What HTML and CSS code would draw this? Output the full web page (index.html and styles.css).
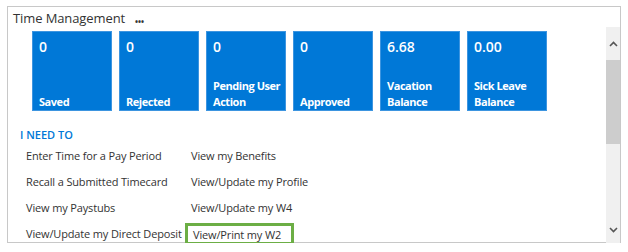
FILE: index.html
```html
<!DOCTYPE html>
<html lang="en">
<head>
    <meta charset="UTF-8">
    <meta name="viewport" content="width=device-width, initial-scale=1.0">
    <title>Time Management</title>
    <link rel="stylesheet" href="styles.css">
</head>
<body>
    <div class="panel">
        <div class="panel-header">
            <span class="panel-title">Time Management</span>
            <span class="more">&bull;&bull;&bull;</span>
        </div>

        <div class="panel-body">
            <div class="content">
                <!-- Tiles -->
                <div class="tiles">
                    <div class="tile"><span class="tile-num">0</span><span class="tile-label">Saved</span></div>
                    <div class="tile"><span class="tile-num">0</span><span class="tile-label">Rejected</span></div>
                    <div class="tile"><span class="tile-num">0</span><span class="tile-label">Pending User Action</span></div>
                    <div class="tile"><span class="tile-num">0</span><span class="tile-label">Approved</span></div>
                    <div class="tile"><span class="tile-num">6.68</span><span class="tile-label">Vacation Balance</span></div>
                    <div class="tile"><span class="tile-num">0.00</span><span class="tile-label">Sick Leave Balance</span></div>
                </div>

                <!-- Links -->
                <h3 class="need-title">I NEED TO</h3>
                <div class="links">
                    <a class="link">Enter Time for a Pay Period</a>
                    <a class="link">View my Benefits</a>
                    <a class="link">Recall a Submitted Timecard</a>
                    <a class="link">View/Update my Profile</a>
                    <a class="link">View my Paystubs</a>
                    <a class="link">View/Update my W4</a>
                    <a class="link">View/Update my Direct Deposit</a>
                    <a class="link highlight">View/Print my W2</a>
                </div>
            </div>

            <div class="scrollbar">
                <div class="scroll-btn">
                    <svg width="9" height="6" viewBox="0 0 9 6"><path d="M1 5 L4.5 1.5 L8 5" fill="none" stroke="#555" stroke-width="1.6"/></svg>
                </div>
                <div class="scroll-thumb"></div>
                <div class="scroll-track"></div>
                <div class="scroll-btn">
                    <svg width="9" height="6" viewBox="0 0 9 6"><path d="M1 1 L4.5 4.5 L8 1" fill="none" stroke="#555" stroke-width="1.6"/></svg>
                </div>
            </div>
        </div>
    </div>
</body>
</html>
```

FILE: styles.css
```css
* {
    margin: 0;
    padding: 0;
    box-sizing: border-box;
    font-family: "Open Sans", "Noto Sans", Arial, sans-serif;
}
body {
    background: #fff;
}
.panel {
    width: 614px;
    height: 237px;
    margin: 6px 0 0 7px;
    border: 1px solid #c8c8c8;
    display: flex;
    flex-direction: column;
}
.panel-header {
    height: 23px;
    padding-left: 5px;
    display: flex;
    align-items: center;
    gap: 10px;
}
.panel-title {
    font-size: 13px;
    color: #333;
    letter-spacing: -0.1px;
    padding-top: 2px;
}
.more {
    font-size: 8px;
    font-weight: 700;
    color: #333;
    padding-top: 9px;
}
.panel-body {
    flex: 1;
    display: flex;
}
.content {
    flex: 1;
    padding: 4px 0 0 12px;
}
.tiles {
    display: flex;
    gap: 7px;
    padding-left: 12px;
}
.tile {
    width: 80px;
    height: 80px;
    background: #0078d7;
    border: 1px solid #3d95e0;
    color: #fff;
    display: flex;
    flex-direction: column;
    justify-content: space-between;
    padding: 5px 4px 0 6px;
}
.tile-num {
    font-size: 14px;
    font-weight: 600;
}
.tile-label {
    font-size: 11px;
    font-weight: 700;
    line-height: 16px;
    letter-spacing: -0.45px;
}
.need-title {
    margin-top: 16px;
    font-size: 11px;
    font-weight: 600;
    color: #0078d7;
    line-height: 15px;
}
.links {
    display: grid;
    grid-template-columns: 165px auto;
    grid-auto-rows: 26px;
}
.link {
    font-size: 11px;
    color: #333;
    letter-spacing: -0.15px;
    white-space: nowrap;
    display: flex;
    align-items: center;
    justify-self: start;
    height: 26px;
    padding: 0 8px 0 3px;
    border: 3px solid transparent;
    cursor: pointer;
}
.highlight {
    border-color: #6cae45;
    height: 22px;
    margin-top: 3px;
    padding: 0 10px 0 5px;
}
.scrollbar {
    width: 14px;
    display: flex;
    flex-direction: column;
    background: #f0f0f0;
}
.scroll-btn {
    height: 33px;
    display: flex;
    align-items: center;
    justify-content: center;
}
.scroll-thumb {
    height: 84px;
    background: #cdcdcd;
}
.scroll-track {
    flex: 1;
}
```
